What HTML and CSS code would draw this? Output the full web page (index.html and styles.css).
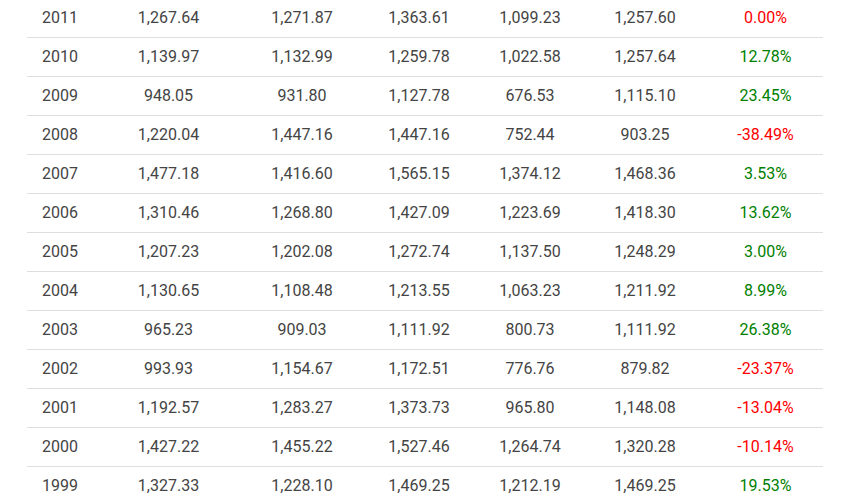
FILE: index.html
```html
<!DOCTYPE html>
<html>
<head>
<meta charset="utf-8">
<link rel="stylesheet" href="styles.css">
</head>
<body>
<div class="wrap">
<table class="data">
<colgroup>
<col class="c1"><col class="c2"><col class="c3"><col class="c4"><col class="c5"><col class="c6"><col class="c7">
</colgroup>
<tbody>
<tr><td>2011</td><td>1,267.64</td><td>1,271.87</td><td>1,363.61</td><td>1,099.23</td><td>1,257.60</td><td class="neg">0.00%</td></tr>
<tr><td>2010</td><td>1,139.97</td><td>1,132.99</td><td>1,259.78</td><td>1,022.58</td><td>1,257.64</td><td class="pos">12.78%</td></tr>
<tr><td>2009</td><td>948.05</td><td>931.80</td><td>1,127.78</td><td>676.53</td><td>1,115.10</td><td class="pos">23.45%</td></tr>
<tr><td>2008</td><td>1,220.04</td><td>1,447.16</td><td>1,447.16</td><td>752.44</td><td>903.25</td><td class="neg">-38.49%</td></tr>
<tr><td>2007</td><td>1,477.18</td><td>1,416.60</td><td>1,565.15</td><td>1,374.12</td><td>1,468.36</td><td class="pos">3.53%</td></tr>
<tr><td>2006</td><td>1,310.46</td><td>1,268.80</td><td>1,427.09</td><td>1,223.69</td><td>1,418.30</td><td class="pos">13.62%</td></tr>
<tr><td>2005</td><td>1,207.23</td><td>1,202.08</td><td>1,272.74</td><td>1,137.50</td><td>1,248.29</td><td class="pos">3.00%</td></tr>
<tr><td>2004</td><td>1,130.65</td><td>1,108.48</td><td>1,213.55</td><td>1,063.23</td><td>1,211.92</td><td class="pos">8.99%</td></tr>
<tr><td>2003</td><td>965.23</td><td>909.03</td><td>1,111.92</td><td>800.73</td><td>1,111.92</td><td class="pos">26.38%</td></tr>
<tr><td>2002</td><td>993.93</td><td>1,154.67</td><td>1,172.51</td><td>776.76</td><td>879.82</td><td class="neg">-23.37%</td></tr>
<tr><td>2001</td><td>1,192.57</td><td>1,283.27</td><td>1,373.73</td><td>965.80</td><td>1,148.08</td><td class="neg">-13.04%</td></tr>
<tr><td>2000</td><td>1,427.22</td><td>1,455.22</td><td>1,527.46</td><td>1,264.74</td><td>1,320.28</td><td class="neg">-10.14%</td></tr>
<tr><td>1999</td><td>1,327.33</td><td>1,228.10</td><td>1,469.25</td><td>1,212.19</td><td>1,469.25</td><td class="pos">19.53%</td></tr>
</tbody>
</table>
</div>
</body>
</html>
```
FILE: styles.css
```css
html, body {
  margin: 0;
  padding: 0;
  background: #fff;
  overflow: hidden;
}
.wrap {
  padding: 0 25px 0 27px;
  margin-top: -1px;
}
.data {
  width: 796px;
  border-collapse: collapse;
  table-layout: fixed;
  font-family: Roboto, "Liberation Sans", sans-serif;
  font-size: 16px;
  color: #444;
}
.data td {
  height: 38px;
  padding: 0;
  text-align: center;
  vertical-align: middle;
  border-bottom: 1px solid #dedede;
  line-height: 20px;
}
.c1 { width: 66px; }
.c2 { width: 151px; }
.c3 { width: 116px; }
.c4 { width: 118px; }
.c5 { width: 104px; }
.c6 { width: 126px; }
.c7 { width: 115px; }
.pos { color: #008000; }
.neg { color: #ff0000; }
```
